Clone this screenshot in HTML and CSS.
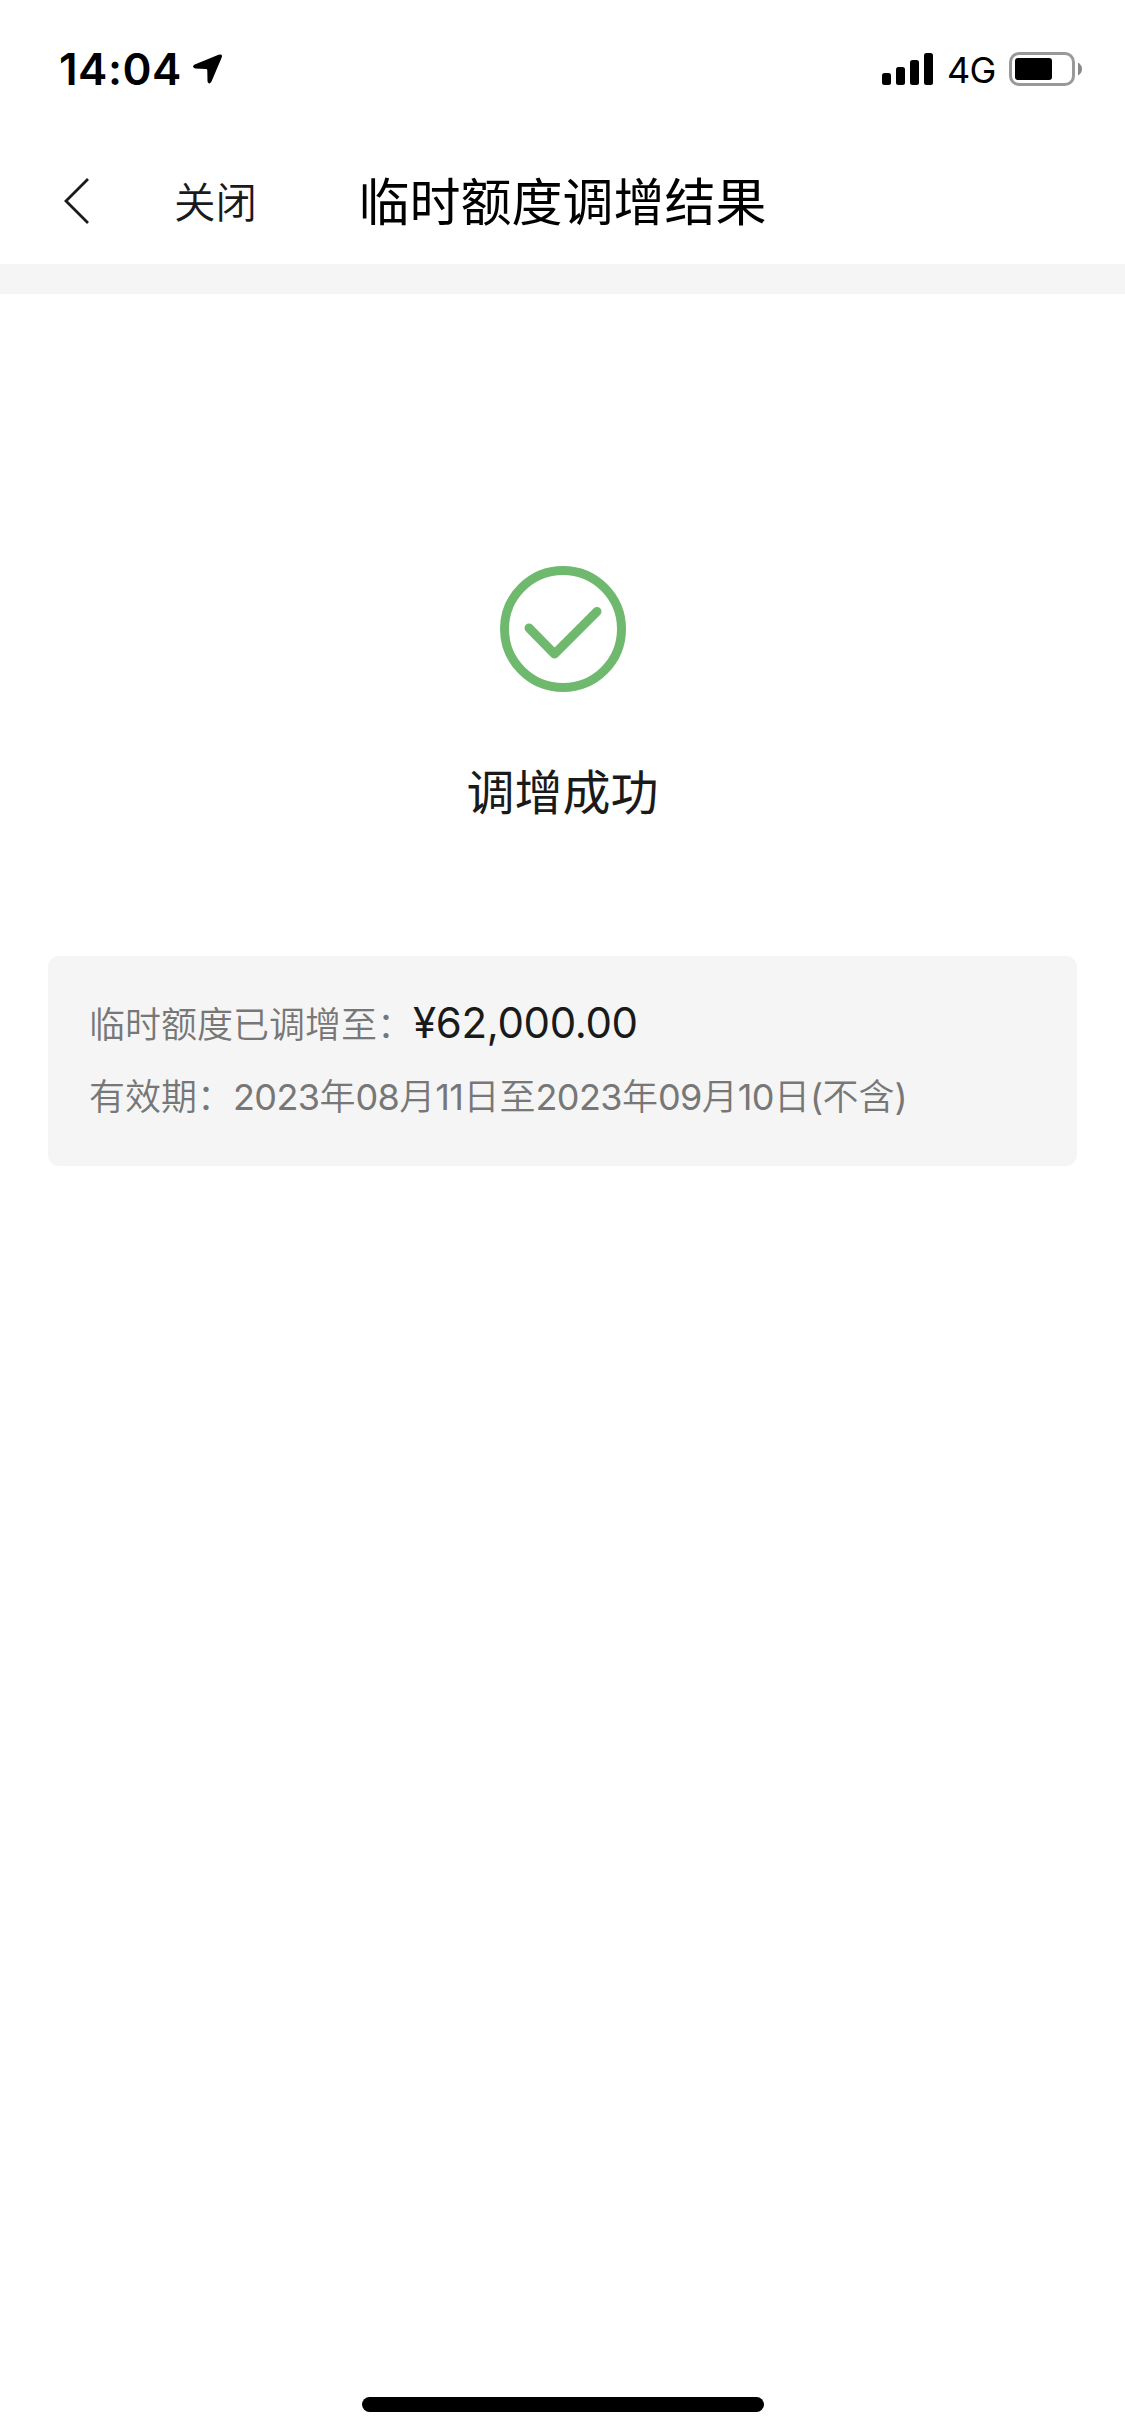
FILE: index.html
```html
<!DOCTYPE html>
<html lang="zh-CN">
<head>
<meta charset="utf-8">
<meta name="viewport" content="width=1125">
<title>临时额度调增结果</title>
<link rel="stylesheet" href="styles.css">
</head>
<body>
<div class="screen">
  <header class="status-bar">
    <div class="status-left">
      <span class="time">14:04</span>
      <svg class="location" width="32" height="32" viewBox="0 0 32 32" aria-hidden="true"><path d="M3.200 11.800 L27.500 1.800 Q32 0.500 30.700 4.500 L20.500 28.600 Q18 32.500 16.500 28.400 L16.300 17.200 Q16.200 16 15 16 L4 15.400 Q0.500 14 3.200 11.800Z"/></svg>
    </div>
    <div class="status-right">
      <svg width="51" height="32" viewBox="0 0 51 32" aria-hidden="true"><rect x="0" y="20" width="9" height="12" rx="2.500"/><rect x="14" y="14" width="9" height="18" rx="2.500"/><rect x="28" y="7" width="9" height="25" rx="2.500"/><rect x="42" y="0" width="9" height="32" rx="2.500"/></svg>
      <span class="network">4G</span>
      <svg width="74" height="34" viewBox="0 0 74 34" aria-hidden="true"><rect x="1.500" y="1.500" width="63" height="31" rx="8.500" fill="none" stroke="#999" stroke-width="3"/><rect x="6" y="6" width="37" height="22" rx="3"/><path d="M69 10.500 Q73 13 73 17 Q73 21 69 23.500Z" fill="#888"/></svg>
    </div>
  </header>
  <nav class="nav-bar">
    <div class="nav-actions">
      <svg width="26" height="48" viewBox="0 0 26 48" aria-hidden="true"><path d="M24 2 L2 24 L24 46" fill="none" stroke="#1a1a1a" stroke-width="2.800"/></svg>
      <span class="close">关闭</span>
    </div>
    <h1 class="title">临时额度调增结果</h1>
  </nav>
  <main class="content">
    <svg class="success-icon" width="126" height="126" viewBox="0 0 126 126" aria-hidden="true"><circle cx="63" cy="63" r="58.500"/><path d="M29 62 L54.500 88 L97 45.500"/></svg>
    <h2 class="result">调增成功</h2>
    <section class="details">
      <p class="row">临时额度已调增至：<span class="amount">¥62,000.00</span></p>
      <p class="row"><span>有效期：</span><span class="num">2023</span>年<span class="num">08</span>月<span class="num">11</span>日至<span class="num">2023</span>年<span class="num">09</span>月<span class="num">10</span>日<span class="num">(</span>不含<span class="num">)</span></p>
    </section>
  </main>
  <footer class="home-area"><div class="home-indicator"></div></footer>
</div>
</body>
</html>
```
FILE: styles.css
```css
* { box-sizing: border-box; }
body {
  margin: 0;
  background: #fff;
  color: #000;
  font-family: Inter, "Noto Sans CJK SC", sans-serif;
}
.screen {
  width: 1125px;
  height: 2436px;
  display: flex;
  flex-direction: column;
}
.screen svg { display: block; flex: none; }
.status-bar {
  height: 138px;
  display: flex;
  justify-content: space-between;
  padding: 0 42px 0 59px;
}
.status-left, .status-right {
  display: flex;
  align-items: center;
  height: 138px;
}
.time {
  width: 132px;
  font-size: 44px;
  font-weight: 600;
  letter-spacing: 0.5px;
}
.network {
  width: 76px;
  padding: 2px 0 0 14px;
  font-size: 36px;
  font-weight: 400;
  letter-spacing: -0.8px;
  line-height: 44px;
}
.nav-bar {
  height: 126px;
  display: grid;
  grid-template-columns: 1fr auto 1fr;
  align-items: center;
  padding: 0 64px;
}
.nav-actions { display: flex; align-items: center; gap: 84px; }
.close {
  padding-top: 3px;
  font-size: 41.500px;
  font-weight: 350;
  line-height: 60px;
  color: #1a1a1a;
}
.title {
  margin: 0;
  padding-top: 3px;
  font-size: 51px;
  font-weight: 400;
  line-height: 76px;
}
.content {
  flex: 1;
  display: flex;
  flex-direction: column;
  align-items: center;
  border-top: 30px solid #f5f5f5;
  padding: 272px 48px 0;
}
.success-icon {
  fill: none;
  stroke: #6fb96f;
  stroke-width: 9;
  stroke-linecap: round;
  stroke-linejoin: round;
}
.result {
  margin: 65px 0 0;
  font-size: 48px;
  font-weight: 400;
  line-height: 72px;
  color: #1a1a1a;
}
.details {
  align-self: stretch;
  height: 210px;
  margin-top: 127px;
  padding: 31px 41px;
  border-radius: 11px;
  background: #f5f5f5;
}
.row {
  margin: 0;
  font-size: 36px;
  font-weight: 350;
  line-height: 72px;
  color: #777;
  white-space: nowrap;
}
.num { font-weight: 400; letter-spacing: -0.6px; }
.amount {
  font-size: 42px;
  font-weight: 400;
  letter-spacing: -0.350px;
  color: #1a1a1a;
}
.home-area { display: flex; justify-content: center; padding-bottom: 24px; }
.home-indicator { width: 402px; height: 15px; border-radius: 8px; background: #000; }
```
